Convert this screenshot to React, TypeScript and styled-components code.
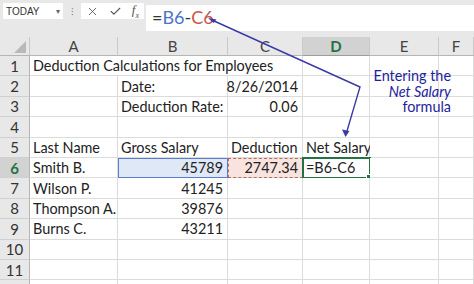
import styled, { createGlobalStyle } from "styled-components";
import { X, Check } from "lucide-react";

const GlobalStyle = createGlobalStyle`
  html, body { margin: 0; padding: 0; background: #fff; }
  body { font-family: Lato, "Liberation Sans", sans-serif; }
`;

type CellData = {
  text?: string;
  align?: "left" | "right";
  span?: number;
  kind?: "blueRef" | "redRef" | "active";
};

const rows: CellData[][] = [
  [{ text: "Deduction Calculations for Employees", span: 3 }, {}, {}, {}],
  [{}, { text: "Date:" }, { text: "8/26/2014", align: "right" }, {}, {}, {}],
  [{}, { text: "Deduction Rate:" }, { text: "0.06", align: "right" }, {}, {}, {}],
  [{}, {}, {}, {}, {}, {}],
  [{ text: "Last Name" }, { text: "Gross Salary" }, { text: "Deduction" }, { text: "Net Salary" }, {}, {}],
  [
    { text: "Smith B." },
    { text: "45789", align: "right", kind: "blueRef" },
    { text: "2747.34", align: "right", kind: "redRef" },
    { text: "=B6-C6", kind: "active" },
    {},
    {},
  ],
  [{ text: "Wilson P." }, { text: "41245", align: "right" }, {}, {}, {}, {}],
  [{ text: "Thompson A." }, { text: "39876", align: "right" }, {}, {}, {}, {}],
  [{ text: "Burns C." }, { text: "43211", align: "right" }, {}, {}, {}, {}],
  [{}, {}, {}, {}, {}, {}],
  [{}, {}, {}, {}, {}, {}],
  [{}, {}, {}, {}, {}, {}],
];

const columns = ["A", "B", "C", "D", "E", "F"];

// rows past this one are only a sliver at the bottom edge
const LAST_LABELLED_ROW = 11;

const App = () => {
  return (
    <Page>
      <GlobalStyle />
      <Toolbar>
        <NameBox>
          <span>TODAY</span>
          <Caret>▾</Caret>
        </NameBox>
        <Grip>⁝</Grip>
        <FormulaButtons>
          <X size={13} strokeWidth={1.6} color="#555" />
          <Check size={13} strokeWidth={2} color="#555" />
          <Fx>
            f<sub>x</sub>
          </Fx>
        </FormulaButtons>
        <FormulaInput>
          =<RefBlue>B6</RefBlue>-<RefRed>C6</RefRed>
        </FormulaInput>
      </Toolbar>

      <Sheet>
        <Corner>
          <svg width="14" height="14" viewBox="0 0 14 14">
            <polygon points="13,1 13,13 1,13" fill="#b9b9b9" />
          </svg>
        </Corner>
        {columns.map((c) => (
          <ColHeader key={c} $selected={c === "D"}>
            {c}
          </ColHeader>
        ))}
        {rows.map((row, r) => (
          <Row key={r} row={row} index={r + 1} />
        ))}
      </Sheet>

      <Note>
        <NoteLine>Entering the</NoteLine>
        <NoteLine>
          <em>Net Salary</em>
        </NoteLine>
        <NoteLine>formula</NoteLine>
      </Note>

      <Arrows width="474" height="284" viewBox="0 0 474 284">
        <g stroke="#3a3aa6" strokeWidth="1.4" fill="none">
          <polyline points="213,20.5 360,87 347,131" />
        </g>
        <polygon points="208,18 216.5,19.5 213.5,23" fill="#3a3aa6" />
        <polygon points="345.5,137 342,129.5 349.5,131" fill="#3a3aa6" />
      </Arrows>
    </Page>
  );
};

const Row = ({ row, index }: { row: CellData[]; index: number }) => (
  <>
    <RowHeader $selected={index === 6}>
      {index <= LAST_LABELLED_ROW ? index : null}
    </RowHeader>
    {row.map((cell, i) => (
      <Cell
        key={i}
        $align={cell.align ?? "left"}
        $span={cell.span ?? 1}
        $kind={cell.kind}
      >
        {cell.text}
        {cell.kind === "active" && <FillHandle />}
      </Cell>
    ))}
  </>
);

const Page = styled.div`
  position: relative;
  width: 474px;
  height: 284px;
  overflow: hidden;
  background: #fff;
`;

const Toolbar = styled.div`
  display: flex;
  align-items: flex-start;
  height: 37px;
  padding: 3px 0 0 3px;
  box-sizing: border-box;
  background: #e8e8e8;
`;

const NameBox = styled.div`
  display: flex;
  align-items: center;
  justify-content: space-between;
  width: 60px;
  height: 16px;
  padding: 0 3px;
  box-sizing: border-box;
  background: #fff;
  font-family: "Liberation Sans", sans-serif;
  font-size: 10px;
  color: #333;
`;

const Caret = styled.span`
  font-size: 8px;
  color: #666;
`;

const Grip = styled.span`
  width: 18px;
  text-align: center;
  font-size: 10px;
  line-height: 16px;
  color: #8a8a8a;
`;

const FormulaButtons = styled.div`
  display: flex;
  align-items: center;
  justify-content: space-around;
  width: 63px;
  height: 16px;
  background: #fff;
`;

const Fx = styled.span`
  font-family: "Liberation Serif", serif;
  font-style: italic;
  font-size: 13px;
  color: #555;
  line-height: 1;

  sub {
    font-size: 8px;
  }
`;

const FormulaInput = styled.div`
  flex: 1;
  height: 26px;
  margin: 2px 0 0 2px;
  padding-left: 6px;
  background: #fff;
  font-family: Lato, "Liberation Sans", sans-serif;
  font-size: 18px;
  line-height: 25px;
  color: #333;
`;

const RefBlue = styled.span`
  color: #4a74c9;
`;

const RefRed = styled.span`
  color: #c8564b;
`;

const Sheet = styled.div`
  display: grid;
  grid-template-columns: 30px 88px 110px 75px 67px 69px 1fr;
  grid-template-rows: 19px repeat(12, 20.4px);
  font-family: Lato, "Liberation Sans", sans-serif;
  font-size: 14.4px;
  color: #222;
`;

const Corner = styled.div`
  display: flex;
  align-items: flex-end;
  justify-content: flex-end;
  padding: 0 2px 1px 0;
  background: #e8e8e8;
  border-right: 1px solid #c9c9c9;
  border-bottom: 1px solid #b5b5b5;
`;

const ColHeader = styled.div<{ $selected: boolean }>`
  display: flex;
  align-items: center;
  justify-content: center;
  font-size: 15px;
  background: ${(p) => (p.$selected ? "#d2d2d2" : "#e8e8e8")};
  color: ${(p) => (p.$selected ? "#217346" : "#444")};
  font-weight: ${(p) => (p.$selected ? 700 : 400)};
  border-right: 1px solid #c9c9c9;
  border-bottom: 1px solid ${(p) => (p.$selected ? "#9d9d9d" : "#b5b5b5")};
  box-sizing: border-box;
`;

const RowHeader = styled.div<{ $selected: boolean }>`
  display: flex;
  align-items: center;
  justify-content: center;
  font-size: 15px;
  background: ${(p) => (p.$selected ? "#d2d2d2" : "#e8e8e8")};
  color: ${(p) => (p.$selected ? "#217346" : "#333")};
  font-weight: ${(p) => (p.$selected ? 700 : 400)};
  border-right: 1px solid #b5b5b5;
  border-bottom: 1px solid #d0d0d0;
  box-sizing: border-box;
`;

const Cell = styled.div<{
  $align: "left" | "right";
  $span: number;
  $kind?: "blueRef" | "redRef" | "active";
}>`
  position: relative;
  grid-column: span ${(p) => p.$span};
  display: flex;
  align-items: center;
  justify-content: ${(p) => (p.$align === "right" ? "flex-end" : "flex-start")};
  padding: 0 4px 0 3px;
  box-sizing: border-box;
  white-space: nowrap;
  border-right: 1px solid #dcdcdc;
  border-bottom: 1px solid #dcdcdc;
  background: ${(p) =>
    p.$kind === "blueRef" ? "#dfe8f6" : p.$kind === "redRef" ? "#f8e3de" : "#fff"};
  ${(p) => p.$kind === "blueRef" && "outline: 1px solid #5b7ccc; outline-offset: -1px;"}
  ${(p) => p.$kind === "redRef" && "outline: 1px dashed #b56b5e; outline-offset: -1px;"}
  ${(p) => p.$kind === "active" && "outline: 2px solid #217346; outline-offset: -1px;"}
`;

const FillHandle = styled.span`
  position: absolute;
  right: -3px;
  bottom: -3px;
  width: 4px;
  height: 4px;
  background: #217346;
  border: 1px solid #fff;
`;

const Note = styled.div`
  position: absolute;
  top: 68px;
  right: 23px;
  display: flex;
  flex-direction: column;
  align-items: flex-end;
  font-family: Lato, "Liberation Sans", sans-serif;
  font-size: 14.4px;
  color: #1e1e9e;

  em {
    font-style: italic;
  }
`;

const NoteLine = styled.span`
  height: 15.5px;
  line-height: 15.5px;
`;

const Arrows = styled.svg`
  position: absolute;
  top: 0;
  left: 0;
  pointer-events: none;
`;

export default App;
